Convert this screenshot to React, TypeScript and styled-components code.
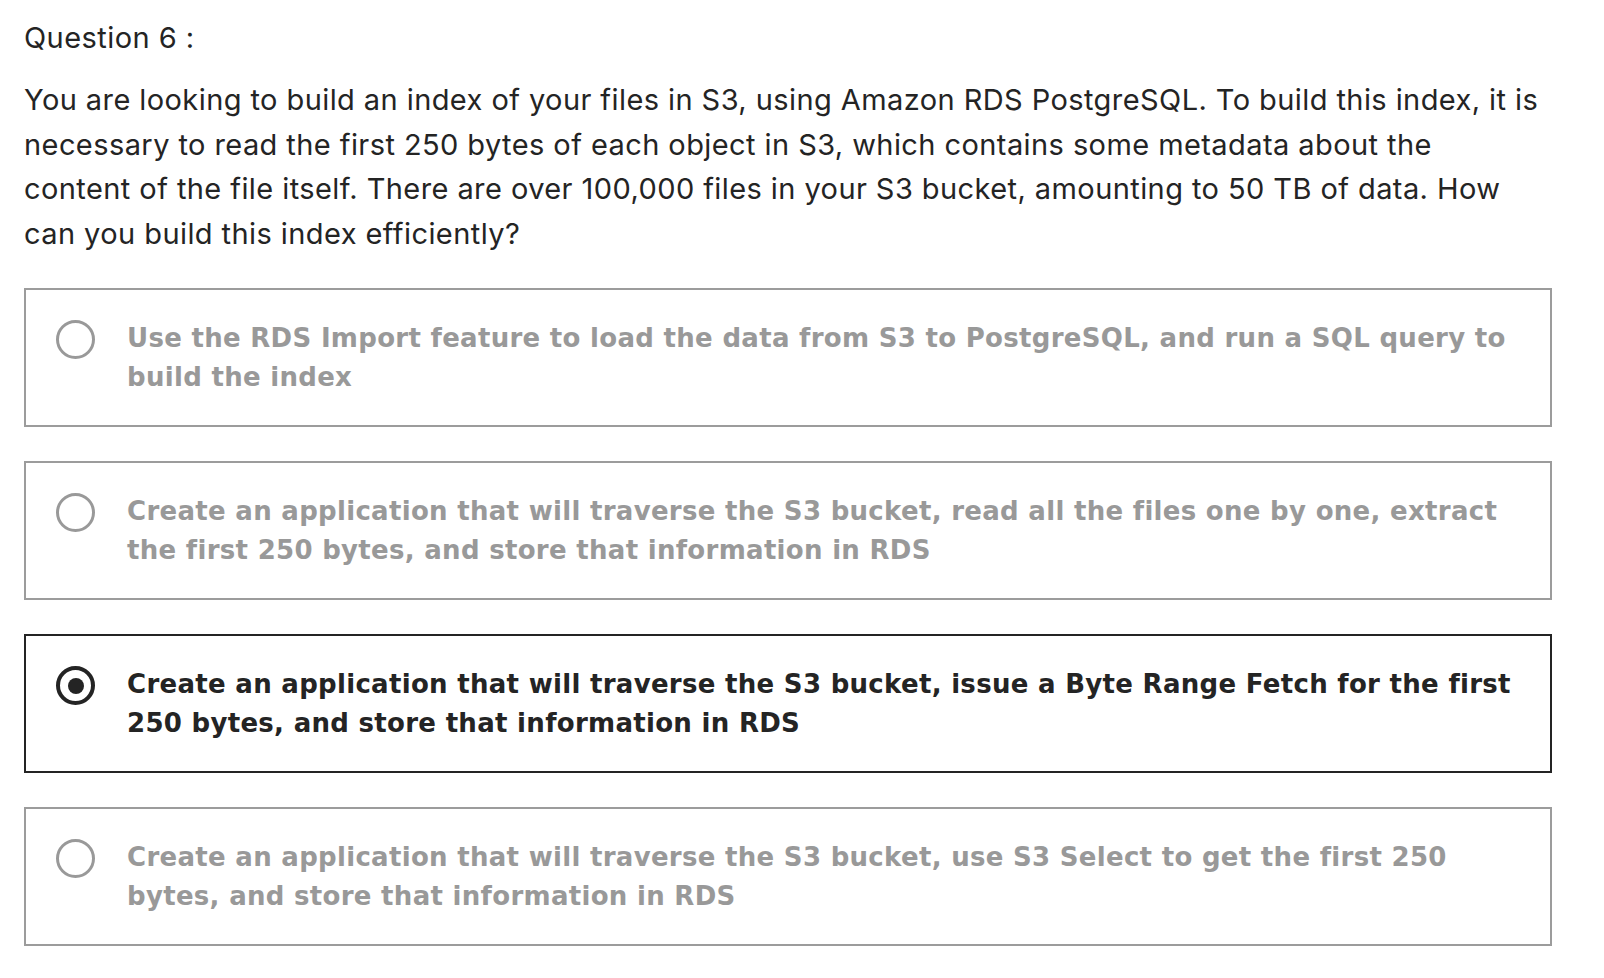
import React from "react";
import styled, { createGlobalStyle } from "styled-components";

const Global = createGlobalStyle`
  html, body { margin: 0; padding: 0; background: #ffffff; }
  body { font-family: Inter, "Liberation Sans", Arial, sans-serif; color: #242424; }
`;

const Page = styled.div`
  width: 1528px;
  padding: 18px 0 0 24px;
  display: flex;
  flex-direction: column;
`;

const Title = styled.div`
  font-size: 29px;
  line-height: 40px;
  letter-spacing: 0.45px;
  color: #242424;
  margin-bottom: 20px;
`;

const Prompt = styled.p`
  margin: 0 0 32px 0;
  font-size: 29px;
  line-height: 44.5px;
  letter-spacing: 0.42px;
  color: #242424;
`;

const Options = styled.div`
  display: flex;
  flex-direction: column;
  gap: 34px;
`;

const Option = styled.div<{ $selected?: boolean }>`
  display: flex;
  align-items: flex-start;
  gap: 32px;
  height: 139px;
  box-sizing: border-box;
  padding: 29px 40px 0 30px;
  border: 2px solid ${(p) => (p.$selected ? "#242424" : "#9c9c9c")};
`;

const Radio = styled.span<{ $selected?: boolean }>`
  flex: none;
  width: 39px;
  height: 39px;
  box-sizing: border-box;
  border-radius: 50%;
  border: ${(p) => (p.$selected ? "4px solid #242424" : "3px solid #999999")};
  display: flex;
  align-items: center;
  justify-content: center;
  margin-top: 1px;
  &::after {
    content: "";
    display: ${(p) => (p.$selected ? "block" : "none")};
    width: 16px;
    height: 16px;
    border-radius: 50%;
    background: #242424;
  }
`;

const OptionText = styled.div<{ $selected?: boolean }>`
  font-family: "DejaVu Sans", Inter, sans-serif;
  font-size: 26px;
  font-weight: 700;
  line-height: 38.5px;
  letter-spacing: 0.3px;
  white-space: nowrap;
  color: ${(p) => (p.$selected ? "#242424" : "#999999")};
`;

const options = [
  {
    lines: [
      "Use the RDS Import feature to load the data from S3 to PostgreSQL, and run a SQL query to",
      "build the index",
    ],
  },
  {
    lines: [
      "Create an application that will traverse the S3 bucket, read all the files one by one, extract",
      "the first 250 bytes, and store that information in RDS",
    ],
  },
  {
    lines: [
      "Create an application that will traverse the S3 bucket, issue a Byte Range Fetch for the first",
      "250 bytes, and store that information in RDS",
    ],
    selected: true,
  },
  {
    lines: [
      "Create an application that will traverse the S3 bucket, use S3 Select to get the first 250",
      "bytes, and store that information in RDS",
    ],
  },
];

export default function App() {
  return (
    <>
      <Global />
      <Page>
        <Title>Question 6 :</Title>
        <Prompt>
          You are looking to build an index of your files in S3, using Amazon RDS PostgreSQL. To build this index, it is
          <br />
          necessary to read the first 250 bytes of each object in S3, which contains some metadata about the
          <br />
          content of the file itself. There are over 100,000 files in your S3 bucket, amounting to 50 TB of data. How
          <br />
          can you build this index efficiently?
        </Prompt>
        <Options>
          {options.map((o, i) => (
            <Option key={i} $selected={o.selected}>
              <Radio $selected={o.selected} />
              <OptionText $selected={o.selected}>
                {o.lines[0]}
                <br />
                {o.lines[1]}
              </OptionText>
            </Option>
          ))}
        </Options>
      </Page>
    </>
  );
}
